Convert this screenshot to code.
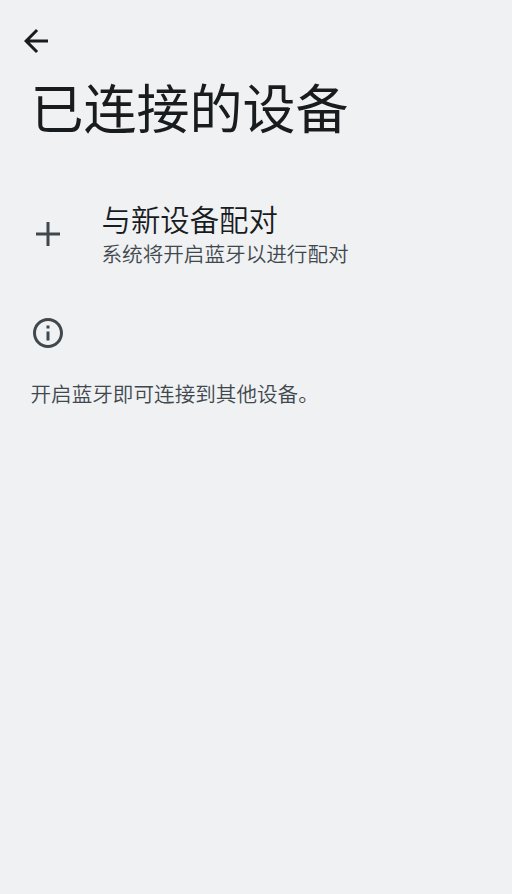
<main>
  <header>
    <button aria-label="返回">
      <svg width="36" height="36" viewBox="0 0 24 24"><path d="M20 11H7.83l5.59-5.59L12 4l-8 8 8 8 1.41-1.41L7.83 13H20v-2z" /></svg>
    </button>
    <h1>已连接的设备</h1>
  </header>
  <section class="pair">
    <svg width="36" height="36" viewBox="0 0 24 24"><path d="M20 13h-7v7h-2v-7H4v-2h7V4h2v7h7z" /></svg>
    <div>
      <h2>与新设备配对</h2>
      <p>系统将开启蓝牙以进行配对</p>
    </div>
  </section>
  <footer>
    <svg width="36" height="36" viewBox="0 0 24 24"><path d="M11 7h2v2h-2zm0 4h2v6h-2zm1-9C6.48 2 2 6.48 2 12s4.48 10 10 10 10-4.48 10-10S17.52 2 12 2zm0 18c-4.41 0-8-3.59-8-8s3.59-8 8-8 8 3.59 8 8-3.59 8-8 8z" /></svg>
    <p>开启蓝牙即可连接到其他设备。</p>
  </footer>
</main>

<style>
  :global(body) { background: #eff1f3; }
  main {
    min-height: 894px;
    box-sizing: border-box;
    background: #eff1f3;
    color: #191c1e;
    font-family: "Noto Sans CJK SC", sans-serif;
    padding: 22.5px 0 0;
  }
  h1, h2, p { margin: 0; font-weight: 400; white-space: nowrap; }
  svg { display: block; fill: currentColor; flex: none; }
  button { display: block; border: 0; padding: 0; margin-left: 18px; background: none; color: #191c1e; }
  h1 { margin: 11.5px 0 0 30.5px; font-size: 53px; line-height: 72px; }
  .pair { display: flex; align-items: center; gap: 35.5px; margin-top: 56px; padding-left: 30px; }
  .pair svg, footer { color: #41484d; }
  .pair svg { margin-top: 3px; }
  h2 { font-size: 29.4px; line-height: 40px; font-weight: 350; }
  p { font-size: 20.6px; line-height: 28px; color: #41484d; font-weight: 350; }
  .pair p { margin-top: 1px; }
  footer { padding-left: 30px; margin-top: 47.5px; }
  footer p { margin: 28.5px 0 0 0.5px; }
</style>
